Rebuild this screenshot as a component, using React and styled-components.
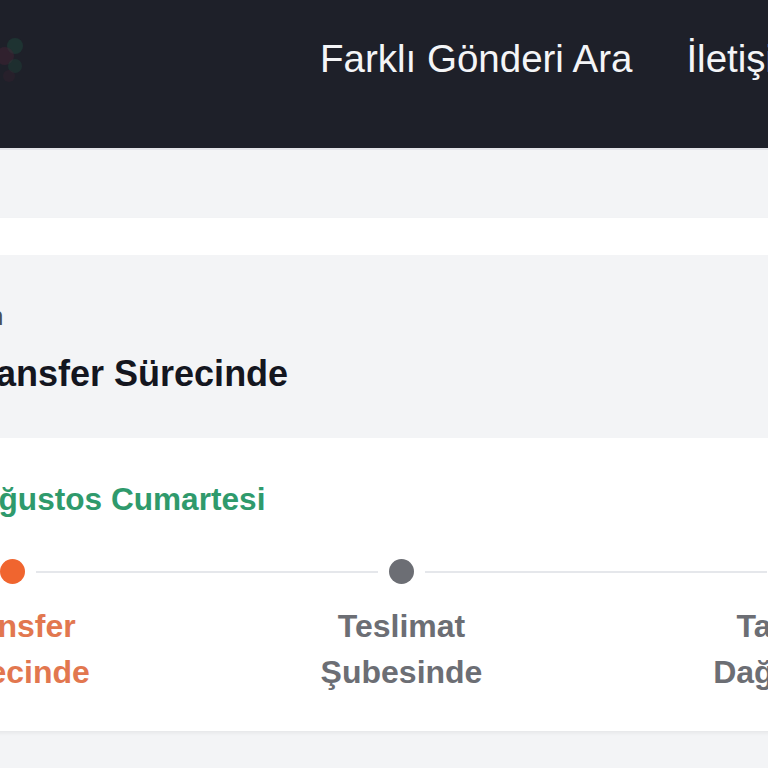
import React from "react";
import styled, { createGlobalStyle } from "styled-components";

const Global = createGlobalStyle`
  html, body { margin: 0; padding: 0; background: #f3f4f6; }
  body { font-family: "Liberation Sans", Arial, sans-serif; }
  * { box-sizing: border-box; }
`;

const Stage = styled.div`
  width: 768px;
  height: 768px;
  overflow: hidden;
  background: #f3f4f6;
`;

const Inner = styled.div`
  width: 1500px;
  margin-left: -230px;
`;

const Header = styled.header`
  height: 150px;
  background: #1e2029;
  border-bottom: 2px solid #e3e4e8;
  display: flex;
  align-items: flex-start;
  padding: 28px 0 0 200px;
`;

const Logo = styled.div`
  width: 56px;
  height: 60px;
  display: flex;
  align-items: center;
  justify-content: center;
`;

const Nav = styled.nav`
  display: flex;
  gap: 54px;
  margin-left: 294px;
  margin-top: 8px;
`;

const NavLink = styled.a`
  font-size: 38.5px;
  line-height: 46px;
  color: #f4f5f7;
  text-decoration: none;
  white-space: nowrap;
`;

const Main = styled.main`
  padding-top: 68px;
`;

const Card = styled.section`
  margin: 0 24px;
  background: #ffffff;
  padding: 37px 24px 36px;
  box-shadow: 0 2px 4px rgba(0, 0, 0, 0.06);
`;

const StatusBox = styled.div`
  background: #f3f4f6;
  border-radius: 8px;
  display: flex;
  padding: 46px 0 42px 0;
`;

const IconSlot = styled.div`
  width: 144px;
  flex: none;
`;

const StatusText = styled.div`
  display: flex;
  flex-direction: column;
  gap: 21px;
`;

const StatusLabel = styled.div`
  font-size: 25px;
  line-height: 30px;
  color: #4b5058;
  margin-left: -3px;
`;

const StatusTitle = styled.div`
  font-size: 36px;
  line-height: 44px;
  font-weight: 700;
  color: #14161f;
  white-space: nowrap;
`;

const DateRow = styled.div`
  margin-top: 42px;
  padding-left: 115px;
  font-size: 31.6px;
  line-height: 38px;
  font-weight: 700;
  color: #2f9a6c;
  white-space: nowrap;
`;

const Steps = styled.ol`
  list-style: none;
  margin: 41px 0 0;
  padding: 0;
  display: grid;
  grid-template-columns: repeat(4, 389px);
`;

const Step = styled.li`
  display: flex;
  flex-direction: column;
  align-items: center;
`;

const DotRow = styled.div`
  width: 100%;
  height: 25px;
  display: flex;
  align-items: center;
`;

const Line = styled.span`
  flex: 1;
  height: 2px;
  background: ${(p) => (p.$hidden ? "transparent" : "#e5e7eb")};
`;

const Dot = styled.span`
  width: 25px;
  height: 25px;
  border-radius: 50%;
  margin: 0 11px;
  flex: none;
  background: ${(p) => p.$color};
`;

const StepLabel = styled.div`
  margin-top: 19px;
  max-width: 220px;
  text-align: center;
  font-size: 32px;
  line-height: 46px;
  font-weight: 700;
  color: ${(p) => p.$color};
`;

const steps = [
  { label: "Transfer Sürecinde", dot: "#f0652f", text: "#e2774f" },
  { label: "Teslimat Şubesinde", dot: "#6c6e74", text: "#6c6e74" },
  { label: "Taşıma Dağıtımda", dot: "#6c6e74", text: "#6c6e74" },
  { label: "Teslim Edildi", dot: "#6c6e74", text: "#6c6e74" },
];

export default function App() {
  return (
    <>
      <Global />
      <Stage>
        <Inner>
          <Header>
            <Logo>
              <svg width="50" height="60" viewBox="0 0 50 60" aria-hidden="true">
                <circle cx="42" cy="18" r="8" fill="#1f5142" opacity="0.4" />
                <circle cx="32" cy="28" r="9" fill="#4a2238" opacity="0.4" />
                <circle cx="42" cy="38" r="7" fill="#1f4a3c" opacity="0.35" />
                <circle cx="36" cy="48" r="6" fill="#3e2232" opacity="0.3" />
              </svg>
            </Logo>
            <Nav>
              <NavLink href="#">Farklı Gönderi Ara</NavLink>
              <NavLink href="#">İletişim</NavLink>
            </Nav>
          </Header>
          <Main>
            <Card>
              <StatusBox>
                <IconSlot />
                <StatusText>
                  <StatusLabel>Son</StatusLabel>
                  <StatusTitle>Transfer Sürecinde</StatusTitle>
                </StatusText>
              </StatusBox>
              <DateRow>16 Ağustos Cumartesi</DateRow>
              <Steps>
                {steps.map((s, i) => (
                  <Step key={s.label}>
                    <DotRow>
                      <Line $hidden={i === 0} />
                      <Dot $color={s.dot} />
                      <Line $hidden={i === steps.length - 1} />
                    </DotRow>
                    <StepLabel $color={s.text}>{s.label}</StepLabel>
                  </Step>
                ))}
              </Steps>
            </Card>
          </Main>
        </Inner>
      </Stage>
    </>
  );
}
